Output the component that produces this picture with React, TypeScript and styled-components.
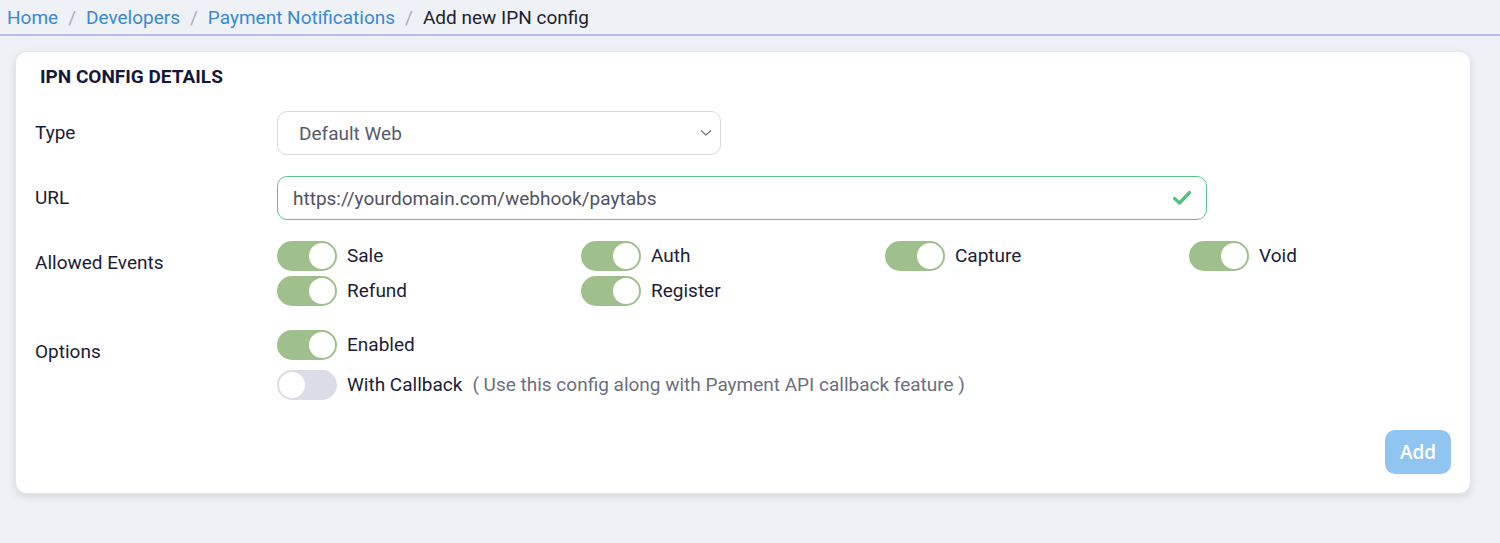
import React from "react";
import styled, { createGlobalStyle } from "styled-components";

const GlobalStyle = createGlobalStyle`
  html, body {
    margin: 0;
    padding: 0;
    background: #eef1f5;
    font-family: Roboto, "Liberation Sans", sans-serif;
  }
`;

const Page = styled.div`
  width: 1500px;
  height: 543px;
  background: #eef1f5;
  overflow: hidden;
`;

const Breadcrumb = styled.nav`
  display: flex;
  align-items: center;
  height: 34px;
  padding-left: 7px;
  font-size: 19px;
  border-bottom: 2px solid #b6bdee;
`;

const Crumb = styled.a`
  color: #3b88d2;
  text-decoration: none;
`;

const Sep = styled.span`
  color: #a9adb8;
  margin: 0 10px;
`;

const Current = styled.span`
  color: #1e1e2e;
`;

const Card = styled.section`
  margin: 15px 0 0 15px;
  width: 1456px;
  box-sizing: border-box;
  background: #fff;
  border: 1px solid #e4e6ec;
  border-radius: 12px;
  box-shadow: 0 3px 8px rgba(30, 40, 60, 0.12);
  padding: 15px 19px 19px 19px;
`;

const Title = styled.h2`
  margin: 0 0 24px 5px;
  font-size: 19px;
  line-height: 20px;
  font-weight: 700;
  color: #16183a;
`;

const Row = styled.div<{ $gap?: number }>`
  display: grid;
  grid-template-columns: 242px 1fr;
  align-items: start;
  margin-bottom: ${(p) => p.$gap ?? 21}px;
`;

const Label = styled.div`
  line-height: 44px;
  font-size: 19px;
  color: #1b1c36;
`;

const SelectBox = styled.div`
  position: relative;
  width: 444px;
  height: 44px;
  box-sizing: border-box;
  border: 1px solid #d6d7e4;
  border-radius: 10px;
  display: flex;
  align-items: center;
  padding-left: 21px;
  font-size: 19px;
  color: #565a6d;
`;

const Chevron = styled.svg`
  position: absolute;
  right: 8px;
  top: 17px;
`;

const InputBox = styled.div`
  width: 930px;
  height: 44px;
  box-sizing: border-box;
  border: 1px solid #5cc48e;
  border-radius: 10px;
  display: flex;
  align-items: center;
  justify-content: space-between;
  padding: 0 14px 0 15px;
  font-size: 19px;
  color: #4e5266;
`;

const ToggleGrid = styled.div`
  display: grid;
  grid-template-columns: repeat(4, 304px);
  row-gap: 5px;
`;

const OptionList = styled.div`
  display: flex;
  flex-direction: column;
  gap: 10px;
`;

const Item = styled.div`
  display: flex;
  align-items: center;
  gap: 10px;
  font-size: 19px;
  color: #1b1c36;
  line-height: 30px;
`;

const Track = styled.span<{ $on: boolean }>`
  position: relative;
  flex: none;
  width: 60px;
  height: 30px;
  border-radius: 15px;
  background: ${(p) => (p.$on ? "#9fbf8d" : "#dcdce9")};
`;

const Knob = styled.span<{ $on: boolean }>`
  position: absolute;
  top: 2px;
  ${(p) => (p.$on ? "right: 2px;" : "left: 2px;")}
  width: 26px;
  height: 26px;
  border-radius: 50%;
  background: #fff;
`;

const Note = styled.span`
  color: #6b6f80;
`;

const Footer = styled.div`
  display: flex;
  justify-content: flex-end;
  margin-top: 30px;
`;

const AddButton = styled.button`
  width: 66px;
  height: 44px;
  border: none;
  border-radius: 10px;
  background: #8fc5f0;
  color: #fff;
  font-family: "Open Sans", Roboto, sans-serif;
  font-size: 19px;
  font-weight: 600;
`;

const Toggle = ({ on, label, children }: { on: boolean; label: string; children?: React.ReactNode }) => (
  <Item>
    <Track $on={on}>
      <Knob $on={on} />
    </Track>
    <span>{label}</span>
    {children}
  </Item>
);

const events = ["Sale", "Auth", "Capture", "Void", "Refund", "Register"];

export default function App() {
  return (
    <Page>
      <GlobalStyle />
      <Breadcrumb>
        <Crumb href="#">Home</Crumb>
        <Sep>/</Sep>
        <Crumb href="#">Developers</Crumb>
        <Sep>/</Sep>
        <Crumb href="#">Payment Notifications</Crumb>
        <Sep>/</Sep>
        <Current>Add new IPN config</Current>
      </Breadcrumb>
      <Card>
        <Title>IPN CONFIG DETAILS</Title>
        <Row>
          <Label>Type</Label>
          <SelectBox>
            Default Web
            <Chevron width="12" height="8" viewBox="0 0 12 8">
              <polyline points="1,1.5 6,6 11,1.5" fill="none" stroke="#6b6f80" strokeWidth="1.2" />
            </Chevron>
          </SelectBox>
        </Row>
        <Row>
          <Label>URL</Label>
          <InputBox>
            <span>https://yourdomain.com/webhook/paytabs</span>
            <svg width="20" height="16" viewBox="0 0 20 16">
              <polyline
                points="2.5,8.5 7.5,13 17.5,2.5"
                fill="none"
                stroke="#52c285"
                strokeWidth="3.4"
                strokeLinecap="round"
                strokeLinejoin="round"
              />
            </svg>
          </InputBox>
        </Row>
        <Row $gap={24}>
          <Label>Allowed Events</Label>
          <ToggleGrid>
            {events.map((e) => (
              <Toggle key={e} on label={e} />
            ))}
          </ToggleGrid>
        </Row>
        <Row $gap={0}>
          <Label>Options</Label>
          <OptionList>
            <Toggle on label="Enabled" />
            <Toggle on={false} label="With Callback">
              <Note>( Use this config along with Payment API callback feature )</Note>
            </Toggle>
          </OptionList>
        </Row>
        <Footer>
          <AddButton>Add</AddButton>
        </Footer>
      </Card>
    </Page>
  );
}
